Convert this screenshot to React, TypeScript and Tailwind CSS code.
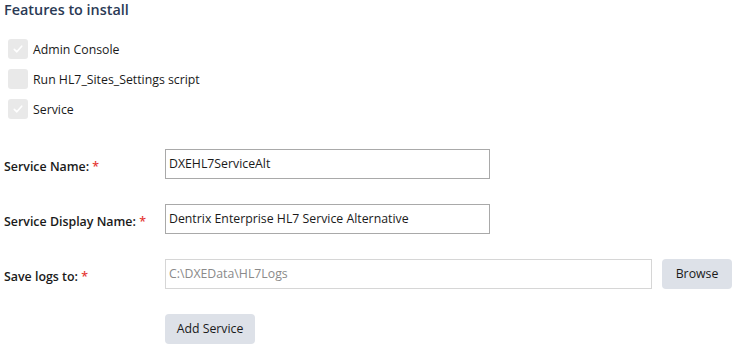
import React from "react";

const font = { fontFamily: '"Open Sans", "Noto Sans", sans-serif' };

function Check({ checked, label }: { checked: boolean; label: string }) {
  return (
    <div className="flex items-center h-[20px] gap-[5px]">
      <div className="w-[20px] h-[20px] rounded-[3px] bg-[#e9e9e9] flex items-center justify-center">
        {checked && (
          <svg width="12" height="12" viewBox="0 0 12 12" fill="none">
            <path d="M2.3 6.3 L4.9 8.8 L9.7 3.2" stroke="#ffffff" strokeWidth="1.6" strokeLinecap="round" strokeLinejoin="round" />
          </svg>
        )}
      </div>
      <span className="text-[12.3px] text-[#1a1a1a] leading-[20px] pt-[1px]">{label}</span>
    </div>
  );
}

function Label({ text }: { text: string }) {
  return (
    <div className="pt-[8px] text-[12.4px] font-semibold text-[#1a1a1a] leading-[20px]">
      {text} <span className="text-[#e53935]">*</span>
    </div>
  );
}

export default function App() {
  return (
    <div className="w-[736px] h-[348px] bg-white px-[4px] overflow-hidden" style={font}>
      <h2 className="text-[14.4px] font-semibold text-[#2b3a55] leading-[20px]">Features to install</h2>
      <div className="mt-[19px] ml-[4px] flex flex-col gap-[10px]">
        <Check checked label="Admin Console" />
        <Check checked={false} label="Run HL7_Sites_Settings script" />
        <Check checked label="Service" />
      </div>
      <div className="mt-[30px] grid grid-cols-[161px_1fr] gap-y-[25px]">
        <Label text="Service Name:" />
        <div>
          <div className="w-[325px] h-[30px] border border-[#a9a9a9] px-[3px] flex items-center text-[12.3px] text-[#1a1a1a]">
            DXEHL7ServiceAlt
          </div>
        </div>
        <Label text="Service Display Name:" />
        <div>
          <div className="w-[325px] h-[30px] border border-[#a9a9a9] px-[3px] flex items-center text-[12.3px] text-[#1a1a1a]">
            Dentrix Enterprise HL7 Service Alternative
          </div>
        </div>
        <Label text="Save logs to:" />
        <div className="flex items-center gap-[10px]">
          <div className="w-[487px] h-[30px] border border-[#d6d6d6] px-[3px] flex items-center text-[12.3px] text-[#8a8a8a]">
            C:\DXEData\HL7Logs
          </div>
          <button className="w-[70px] h-[30px] rounded-[4px] bg-[#dde1e8] text-[12.3px] text-[#1a1a1a]">Browse</button>
        </div>
        <div />
        <div>
          <button className="w-[90px] h-[30px] rounded-[4px] bg-[#dde1e8] text-[12.3px] text-[#1a1a1a]">Add Service</button>
        </div>
      </div>
    </div>
  );
}
